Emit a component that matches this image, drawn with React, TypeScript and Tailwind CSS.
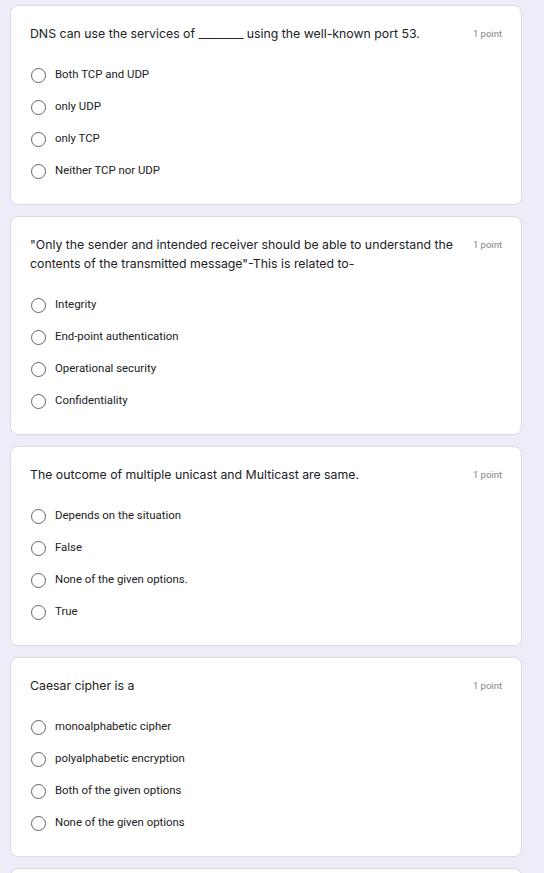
import React from "react";

type Question = {
  title: string;
  options: string[];
};

const questions: Question[] = [
  {
    title: "DNS can use the services of ________ using the well-known port 53.",
    options: ["Both TCP and UDP", "only UDP", "only TCP", "Neither TCP nor UDP"],
  },
  {
    title:
      "\"Only the sender and intended receiver should be able to understand the contents of the transmitted message\"-This is related to-",
    options: ["Integrity", "End-point authentication", "Operational security", "Confidentiality"],
  },
  {
    title: "The outcome of multiple unicast and Multicast are same.",
    options: ["Depends on the situation", "False", "None of the given options.", "True"],
  },
  {
    title: "Caesar cipher is a",
    options: [
      "monoalphabetic cipher",
      "polyalphabetic encryption",
      "Both of the given options",
      "None of the given options",
    ],
  },
];

function QuestionCard({ q }: { q: Question }) {
  return (
    <div className="rounded-[8px] border border-[#dadce0] bg-white px-[19px] pt-[18px] pb-[17px]">
      <div className="flex items-start justify-between gap-3">
        <p className="max-w-[438px] font-['Inter',sans-serif] text-[12.3px] leading-[19px] text-[#202124]">
          {q.title}
        </p>
        <span className="mt-[2px] shrink-0 font-['Roboto',sans-serif] text-[9.5px] leading-[15px] text-[#80868b]">
          1 point
        </span>
      </div>
      <div className="mt-[16px] flex flex-col">
        {q.options.map((o) => (
          <label key={o} className="flex h-[32px] items-center">
            <span className="ml-[1px] h-[15px] w-[15px] shrink-0 rounded-full border-[1.5px] border-[#5f6368]" />
            <span className="ml-[9px] font-['Roboto',sans-serif] text-[11.4px] text-[#202124]">{o}</span>
          </label>
        ))}
      </div>
    </div>
  );
}

export default function App() {
  return (
    <div className="min-h-screen bg-[#f0ebf8] px-[10px] pt-[5px]">
      <div className="flex w-[512px] flex-col gap-[11px]">
        {questions.map((q, i) => (
          <QuestionCard key={i} q={q} />
        ))}
        <div className="h-[40px] rounded-t-[8px] border border-b-0 border-[#dadce0] bg-white" />
      </div>
    </div>
  );
}
